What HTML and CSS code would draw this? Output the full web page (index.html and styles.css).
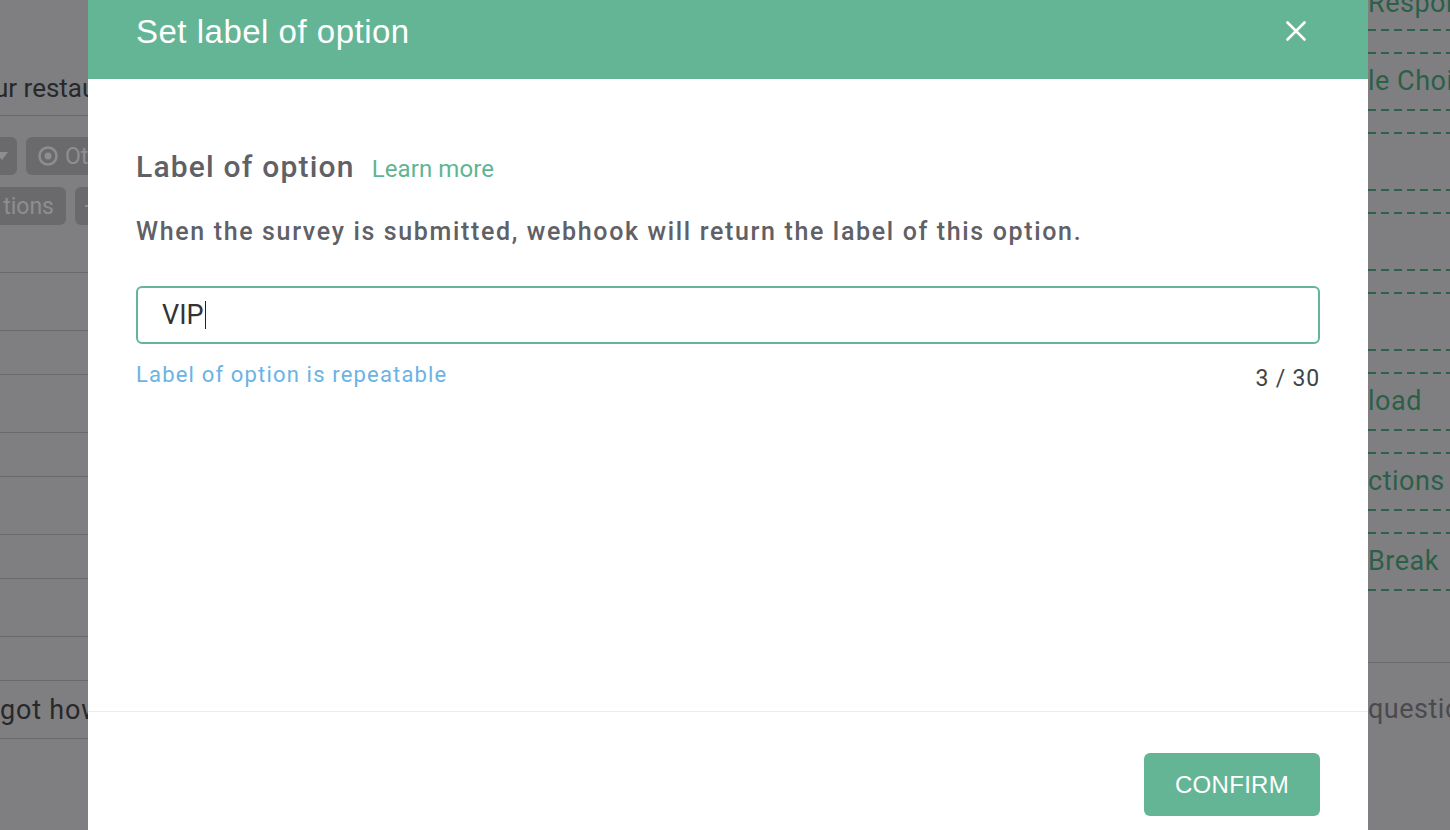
FILE: index.html
```html
<!DOCTYPE html>
<html lang="en">
<head>
<meta charset="utf-8">
<title>Set label of option</title>
<link rel="stylesheet" href="styles.css">
</head>
<body>
<div class="page">
  <div class="left">
    <div class="q-title">ur restaurant</div>
    <div class="rule"></div>
    <div class="chip-row first">
      <div class="chip chip-cut chip-a">
        <svg class="caret" width="12" height="8" viewBox="0 0 12 8"><path d="M0 0 L12 0 L6 8 Z" fill="#8e8e90"/></svg>
      </div>
      <div class="chip chip-b">
        <svg class="radio" width="22" height="22" viewBox="0 0 22 22"><circle cx="11" cy="11" r="8.5" fill="none" stroke="#8e8e90" stroke-width="2.5"/><circle cx="11" cy="11" r="3.5" fill="#8e8e90"/></svg>
        <span class="chip-text">Other</span>
      </div>
    </div>
    <div class="chip-row second">
      <div class="chip chip-cut chip-c"><span class="chip-text">tions</span></div>
      <div class="chip chip-d"><span class="chip-plus">+</span></div>
    </div>
    <div class="row row-first"></div>
    <div class="row row-tall"></div>
    <div class="row row-short"></div>
    <div class="row row-tall"></div>
    <div class="row row-short"></div>
    <div class="row row-tall"></div>
    <div class="row row-short"></div>
    <div class="row row-tall"></div>
    <div class="row row-short"></div>
    <div class="row row-tall"><span class="row-text">got how</span></div>
  </div>
  <div class="middle"></div>
  <div class="right">
    <div class="ritem ritem-first"><span class="rtext">Respon</span></div>
    <div class="ritem"><span class="rtext">le Choi</span></div>
    <div class="ritem"></div>
    <div class="ritem"></div>
    <div class="ritem"></div>
    <div class="ritem"><span class="rtext">load</span></div>
    <div class="ritem"><span class="rtext">ctions</span></div>
    <div class="ritem"><span class="rtext">Break</span></div>
    <div class="rsolid"></div>
    <div class="rquestion">questio</div>
  </div>
</div>

<div class="modal">
  <div class="modal-header">
    <div class="modal-title">Set label of option</div>
    <svg class="close" width="20" height="20" viewBox="0 0 20 20"><path d="M1.5 1.5 L18.5 18.5 M18.5 1.5 L1.5 18.5" stroke="#fff" stroke-width="2.6" stroke-linecap="round"/></svg>
  </div>
  <div class="modal-body">
    <div class="heading-row">
      <span class="heading">Label of option</span>
      <span class="learn">Learn more</span>
    </div>
    <div class="desc">When the survey is submitted, webhook will return the label of this option.</div>
    <div class="input"><span class="input-value">VIP</span><span class="cursor"></span></div>
    <div class="helper-row">
      <span class="helper">Label of option is repeatable</span>
      <span class="counter">3 / 30</span>
    </div>
  </div>
  <div class="modal-footer">
    <div class="btn">CONFIRM</div>
  </div>
</div>
</body>
</html>
```

FILE: styles.css
```css
html, body {
  margin: 0;
  padding: 0;
}
body {
  width: 1450px;
  height: 830px;
  overflow: hidden;
  background: #7f7f82;
  font-family: Roboto, "Noto Sans", sans-serif;
  position: relative;
}

.page {
  display: flex;
  height: 830px;
}

/* left background column */
.left {
  width: 88px;
  overflow: hidden;
  display: flex;
  flex-direction: column;
  white-space: nowrap;
}
.q-title {
  margin-top: 75px;
  font-size: 26px;
  line-height: 26px;
  text-indent: -6px;
  color: #28282a;
}
.rule {
  margin-top: 14px;
  height: 1px;
  background: #6a6a6c;
}
.chip-row {
  display: flex;
  gap: 9px;
  height: 38px;
}
.chip-row.first { margin-top: 21px; }
.chip-row.second { margin-top: 12px; }
.chip {
  background: #6a6a6c;
  border-radius: 6px;
  display: flex;
  align-items: center;
  height: 38px;
}
.chip-cut {
  border-radius: 0 6px 6px 0;
}
.chip-a {
  width: 17px;
  flex: none;
}
.caret {
  margin-left: -4px;
}
.chip-b {
  flex: 1;
  padding-left: 11px;
}
.radio {
  flex: none;
}
.chip-text {
  font-size: 23px;
  color: #8e8e90;
  margin-left: 6px;
}
.chip-c {
  width: 66px;
  flex: none;
  justify-content: flex-end;
  padding-right: 12px;
  box-sizing: border-box;
}
.chip-c .chip-text { margin-left: 0; }
.chip-d {
  flex: 1;
  padding-left: 9px;
}
.chip-plus {
  font-size: 24px;
  color: #8e8e90;
}
.row {
  border-bottom: 1px solid #6a6a6c;
  display: flex;
  align-items: center;
}
.row-first { height: 47px; }
.row-tall { height: 57px; }
.row-short { height: 43px; }
.row-text {
  font-size: 27px;
  letter-spacing: 0.8px;
  color: #28282a;
}

.middle {
  width: 1280px;
  flex: none;
}

/* right background column */
.right {
  width: 82px;
  overflow: hidden;
  display: flex;
  flex-direction: column;
  white-space: nowrap;
}
.ritem {
  height: 59px;
  margin-top: 21px;
  display: flex;
  align-items: center;
  background-image:
    repeating-linear-gradient(90deg, #2f6049 0 8px, transparent 8px 13px),
    repeating-linear-gradient(90deg, #2f6049 0 8px, transparent 8px 13px);
  background-size: 100% 2px, 100% 2px;
  background-position: left top, left bottom;
  background-repeat: no-repeat;
}
.ritem-first {
  height: 31px;
  margin-top: 0;
  align-items: flex-end;
  padding-bottom: 14px;
  box-sizing: border-box;
  background-image: repeating-linear-gradient(90deg, #2f6049 0 8px, transparent 8px 13px);
  background-size: 100% 2px;
  background-position: left bottom;
}
.rtext {
  font-size: 27px;
  line-height: 27px;
  letter-spacing: 0.5px;
  color: #2c5f48;
}
.rsolid {
  margin-top: 71px;
  height: 1px;
  background: #6a6a6c;
}
.rquestion {
  margin-top: 33px;
  font-size: 27px;
  line-height: 27px;
  letter-spacing: 0.5px;
  color: #4a4a4d;
}

/* modal */
.modal {
  position: absolute;
  left: 88px;
  top: 0;
  width: 1280px;
  background: #fff;
  display: flex;
  flex-direction: column;
}
.modal-header {
  height: 79px;
  box-sizing: border-box;
  background: #63b595;
  padding: 15px 48px 0;
  display: flex;
  justify-content: space-between;
  align-items: flex-start;
}
.modal-title {
  font-family: "Liberation Sans", Arial, sans-serif;
  font-size: 33px;
  line-height: 33px;
  letter-spacing: 0.5px;
  color: #fff;
}
.close {
  margin-top: 6px;
  margin-right: 14px;
}
.modal-body {
  height: 632px;
  box-sizing: border-box;
  padding: 73px 48px 0;
  display: flex;
  flex-direction: column;
}
.heading-row {
  display: flex;
  align-items: baseline;
  gap: 17px;
}
.heading {
  font-size: 30px;
  line-height: 30px;
  font-weight: 500;
  letter-spacing: 1.2px;
  color: #606066;
}
.learn {
  font-size: 24px;
  line-height: 24px;
  letter-spacing: 0.1px;
  color: #5fb592;
}
.desc {
  margin-top: 38px;
  font-size: 25px;
  line-height: 24px;
  font-weight: 500;
  letter-spacing: 1.65px;
  color: #606066;
}
.input {
  margin-top: 42px;
  height: 58px;
  box-sizing: border-box;
  border: 2px solid #63b595;
  border-radius: 6px;
  padding-left: 24px;
  display: flex;
  align-items: center;
}
.input-value {
  font-size: 27px;
  color: #333;
}
.cursor {
  width: 0;
  height: 28px;
  border-left: 1.5px solid #222;
  margin-left: 1px;
}
.helper-row {
  margin-top: 20px;
  display: flex;
  justify-content: space-between;
  align-items: flex-start;
}
.helper {
  font-size: 22px;
  line-height: 22px;
  letter-spacing: 1.17px;
  color: #6ab3e3;
}
.counter {
  margin-top: 3px;
  font-size: 23px;
  line-height: 23px;
  letter-spacing: 0.8px;
  color: #444;
}
.modal-footer {
  border-top: 1px solid #ececec;
  padding: 41px 48px 40px;
  display: flex;
  justify-content: flex-end;
}
.btn {
  width: 176px;
  height: 63px;
  background: #63b595;
  border-radius: 6px;
  display: flex;
  align-items: center;
  justify-content: center;
  font-family: "Liberation Sans", Arial, sans-serif;
  font-size: 24px;
  letter-spacing: 0.3px;
  color: #fff;
}
```
